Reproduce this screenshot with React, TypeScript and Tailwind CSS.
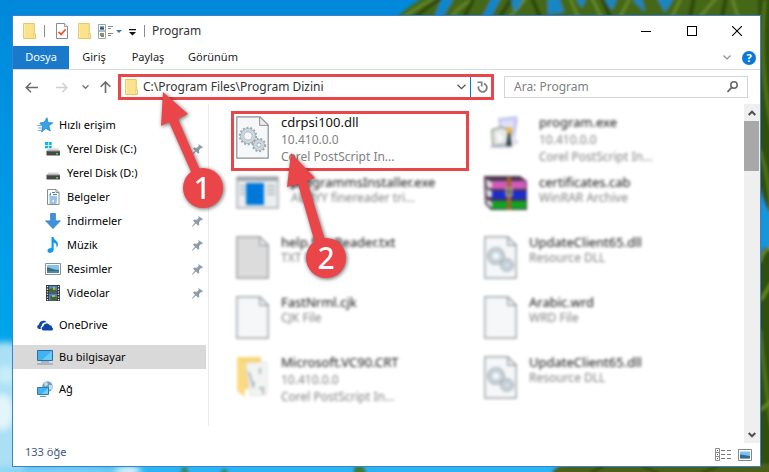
import type { ReactNode } from 'react';
import clsx from 'clsx';

type IconProps = { className?: string };

/* ---------- Desktop ---------- */

const Wallpaper = () => (
  <svg
    className="absolute inset-0 h-full w-full"
    viewBox="0 0 769 472"
    preserveAspectRatio="none"
    aria-hidden="true"
  >
    <defs>
      <linearGradient id="sky" x1="0" y1="0" x2="0" y2="1">
        <stop offset="0" stopColor="#0088da" />
        <stop offset="0.45" stopColor="#009be6" />
        <stop offset="0.7" stopColor="#00a4ea" />
        <stop offset="1" stopColor="#2cb5f5" />
      </linearGradient>
      <filter id="soft" x="-20%" y="-20%" width="140%" height="140%">
        <feGaussianBlur stdDeviation="3" />
      </filter>
      <filter id="leafSoft">
        <feGaussianBlur stdDeviation="1.4" />
      </filter>
    </defs>
    <rect width="769" height="472" fill="url(#sky)" />
    <g filter="url(#soft)">
      <path d="M-10 345 Q8 338 24 348 V480 H-10Z" fill="#a9e0f6" />
      <ellipse cx="2" cy="412" rx="12" ry="18" fill="#e2f5fb" />
      <ellipse cx="6" cy="375" rx="9" ry="9" fill="#c9edf9" />
      <ellipse cx="60" cy="471" rx="70" ry="5" fill="#7fd2f5" />
      <ellipse cx="128" cy="471" rx="13" ry="5" fill="#e6f6fb" />
    </g>
    <g filter="url(#leafSoft)">
      <path d="M397 17 Q420 -4 440 -8 H780 V18 H397Z" fill="#456812" />
      <path d="M404 17 Q424 2 438 -2 M452 17 Q458 6 476 -2 M526 -2 L510 17 M570 -2 L578 17 M592 -2 L601 17 M620 17 L630 -2 M681 -2 L672 17 M700 17 L716 -2 M738 17 L732 -2" stroke="#64862a" strokeWidth="3" fill="none" />
      <path d="M416 17 Q430 4 442 -2 M464 17 L474 -2 M500 17 L512 -2 M540 17 L532 -2 M690 17 L694 -2 M722 17 L726 -2 M610 17 L602 -2" stroke="#2c470a" strokeWidth="4" fill="none" />
      <path d="M442 -2 H454 L442 18 H434Z M492 -2 H501 L490 18 H482Z" fill="#0c87cf" />
      <path d="M548 -2 H559 L564 12 L548 14Z M511 -1 L523 -1 L518 9 L514 11Z M576 -1 h10 l-4 9z M604 -1 h13 l-5 11z M632 -1 l10 0 l3 13z M657 -2 h17 l-9 14z" fill="#1687c4" />
      <path d="M758 -5 H775 V480 H745 V464 H758Z" fill="#2f4f08" />
      <path d="M765 0 Q758 60 772 130 M760 150 Q770 180 771 215 M760 330 Q766 390 772 430" stroke="#55781a" strokeWidth="3" fill="none" />
      <path d="M760 188 Q765 208 772 216 V252 Q765 240 760 256Z" fill="#1597dc" />
      <path d="M760 262 Q765 245 772 250 M761 300 L772 282 M761 410 L772 400" stroke="#6c8c24" strokeWidth="3" fill="none" />
      <path d="M551 474 Q556 464 572 464 H775 V474Z" fill="#4b6014" />
      <path d="M590 474 l14 -9 M640 465 l20 9 M700 474 l20 -9" stroke="#2f4709" strokeWidth="3" />
      <path d="M353 474 l2 -8 h8 l4 8z" fill="#3c7a35" />
      <path d="M180 474 l2 -7 h5 l2 7z M220 474 l2 -5 h5 l1 5z" fill="#338a6a" />
    </g>
  </svg>
);

/* ---------- Icons ---------- */

const FolderIcon = ({ className }: IconProps) => (
  <svg className={clsx('h-4 w-[13px] shrink-0', className)} viewBox="0 0 13 16">
    <path d="M.5.5h10.8v10.4h1.2v4.6H.5z" fill="#fbe28c" stroke="#e7c767" />
    <path d="M10.5 11h2v4.5h-1.2z" fill="#fff3b8" stroke="#e3bd52" strokeWidth=".6" />
    <path d="M1.4 1.4v13.2" stroke="#fdf0bd" strokeWidth=".8" />
  </svg>
);

const CheckPageIcon = () => (
  <svg className="h-4 w-3" viewBox="0 0 12 16">
    <path d="M.5.5h8l3 3v12H.5z" fill="#fff" stroke="#8a8a8a" />
    <path d="M8.5.5v3h3" fill="#eee" stroke="#8a8a8a" strokeWidth=".8" />
    <path d="M2.5 8.800l2.600 2.600 4.600-5.200" fill="none" stroke="#f0512d" strokeWidth="1.700" />
  </svg>
);

const ViewIcon = () => (
  <svg className="h-[15px] w-4" viewBox="0 0 16 15">
    <path d="M.5.5h7v6.500h-7zM.5 7h7v7.500h-7z" fill="#fff" stroke="#a2a2a2" />
    <path d="M2 2h4v3.500H2z" fill="#69a9e0" />
    <path d="M2 4l2-1 2 1v1.500H2z" fill="#2a5674" />
    <path d="M2 9h2v3H2z" fill="#5a8fd8" />
    <path d="M4 9h2v2H4z" fill="#e07850" />
    <path d="M3 11h3v2H3z" fill="#55a645" />
    <path d="M10 2.500h5M10 4.500h3M10 9.500h5M10 11.500h3" stroke="#888" />
  </svg>
);

const StarIcon = () => (
  <svg className="h-4 w-4" viewBox="0 0 16 16">
    <path d="M10 .8l1 4.700 4.800.4-4 2.900 1.500 5.200-4.400-2.600-4.300 3.600 1-5.400L2.800 6l4.300-.7z" fill="#37a3e8" stroke="#1879bd" strokeWidth=".7" />
    <path d="M0 8.500h4M1 11h4M1 13.500h3.500" stroke="#58b5ee" strokeWidth=".9" />
  </svg>
);

const DiskIcon = ({ windows }: { windows?: boolean }) => (
  <svg className="h-4 w-4" viewBox="0 0 16 16">
    {windows && <path d="M0 1h3v3H0zM3.700 1h3v3h-3zM0 4.700h3v2.600H0zM3.700 4.700h3v2.600h-3z" fill="#12b5ea" />}
    <path d="M3.500 7.500h9.500l2 3H1.500z" fill="#d5d5d5" />
    <path d="M1.500 10h13.500v4.500H1.500z" fill="#474747" />
    <path d="M1.500 10h13.500" stroke="#8c8c8c" />
    <path d="M11 12h2v1.500h-2z" fill="#3be04c" />
  </svg>
);

const DocumentIcon = () => (
  <svg className="h-4 w-4" viewBox="0 0 16 16">
    <path d="M2.500.5h8.500l3 3v12H2.500z" fill="#fff" stroke="#8b8b8b" />
    <path d="M11 .5v3h3" fill="none" stroke="#8b8b8b" />
    <path d="M7 3.500h3M8 5.500h4M4.500 8h7.500M4.500 10h7.500M4.500 12h3M9 12h3M4.500 14h7" stroke="#3a86c8" />
    <path d="M4 6.500l2-3.500v3.500z" fill="#3a86c8" />
  </svg>
);

const DownloadIcon = () => (
  <svg className="h-4 w-4" viewBox="0 0 16 16">
    <path d="M5.500.3h5v7.500h5L8 15.700.5 7.800h5z" fill="#3f90de" stroke="#2c79c4" strokeWidth=".6" />
  </svg>
);

const MusicIcon = () => (
  <svg className="h-4 w-4" viewBox="0 0 16 16">
    <path d="M6.500 0h2c.3 3 4.800 4 4.500 7.500-.1 1.500-1 2.500-1.700 3 .8-2.500-.4-4.300-2.600-5v7.300c0 1.700-1.600 3.100-3.600 3.100-1.600 0-2.600-.9-2.600-2.200C2.500 12 4.200 10.900 6.500 11z" fill="#119bed" />
  </svg>
);

const PictureIcon = () => (
  <svg className="h-4 w-4" viewBox="0 0 16 16">
    <path d="M.5 2.500h15v11H.5z" fill="#fff" stroke="#8f8f8f" />
    <path d="M2 4h12v8H2z" fill="#86c2ee" />
    <path d="M2 6.500c3 0 5 2 12 2.500V12H2z" fill="#3b6e71" />
    <path d="M2 10h12v2H2z" fill="#4b86b4" />
  </svg>
);

const VideoIcon = () => (
  <svg className="h-4 w-4" viewBox="0 0 16 16">
    <path d="M1 0h14v16H1z" fill="#333" />
    <path d="M4 .7h8v7H4zM4 8.400h8v7H4z" fill="#4585d6" />
    <path d="M4 4l4-1 4 3v1.700H4zM5 12l3-2 4 3v2.400H6z" fill="#3f6832" />
    <path d="M8 2h2v3H8zM7 10h3v2H7z" fill="#e2a52b" />
    <path d="M2.500 1v15M13.500 1v15" stroke="#e6e6e6" strokeWidth="1.300" strokeDasharray="1.300 1.300" />
  </svg>
);

const CloudIcon = () => (
  <svg className="h-4 w-4" viewBox="0 0 16 16">
    <path d="M1.800 12C-.4 11-.2 8.300 2 7.700 2.300 4.200 7 2.200 9.600 5.300 6.500 5 4.700 6.800 4.600 9 3.500 9.500 3.300 11 4 12z" fill="#0d47a8" />
    <path d="M6.600 13.400c-2.600-.2-2.600-3.600-.2-3.800.2-3.200 4.700-4.400 6.300-1.400 2-.2 2.500 1.400 2.200 2.200 1.700.6 1.300 3-.4 3z" fill="#0d47a8" />
  </svg>
);

const ComputerIcon = () => (
  <svg className="h-4 w-4" viewBox="0 0 16 16">
    <path d="M.5 1.500h15v10H.5z" fill="#41b3f5" stroke="#2a6f9e" />
    <path d="M15 2v9H5z" fill="#6cc9fb" />
    <path d="M4 13h8M0 15h16" stroke="#7894a6" />
  </svg>
);

const NetworkIcon = () => (
  <svg className="h-4 w-4" viewBox="0 0 16 16">
    <circle cx="10.500" cy="5.500" r="5.200" fill="#6d9fb9" />
    <path d="M7 2l3-1.300 1 3-3 2zM12 4l3.500 0-.5 4-3 1z" fill="#c6dde6" />
    <path d="M.5 6.500h11v7H.5z" fill="#41b3f5" stroke="#2a7fb8" />
    <path d="M11 7v6H5z" fill="#74cdfb" />
    <path d="M3 15.500h6" stroke="#7894a6" />
  </svg>
);

const PinIcon = () => (
  <svg className="h-[11px] w-[11px]" viewBox="0 0 11 11" aria-hidden="true">
    <path d="M6.500 0L11 3.300 9.800 4.300 9 4 7 6.300l.3 2.400-1.100 1L4 7.600.6 10.800 0 10.300l3-3.500L1 4.600l1-1 2.500.3L6.700 2z" fill="#8f9ba7" />
  </svg>
);

/* ---------- File type icons ---------- */

const Gear = ({ cx, cy, r }: { cx: number; cy: number; r: number }) => (
  <g fill="none">
    <circle cx={cx} cy={cy} r={r} stroke="#9aa9b3" strokeWidth="2.400" strokeDasharray="1.900 1.700" />
    <circle cx={cx} cy={cy} r={r - 2.2} stroke="#9aa9b3" strokeWidth="4" />
    <circle cx={cx} cy={cy} r={r - 2.2} stroke="#ccd6dc" strokeWidth="2.800" />
  </g>
);

const PageIcon = ({ fill = '#f5f7f9', gears }: { fill?: string; gears?: boolean }) => (
  <svg className="h-[43px] w-[33px]" viewBox="0 0 33 43">
    <path d="M.8.8H24l8.200 8.200v33.200H.8z" fill={fill} stroke="#8d9195" strokeWidth="1.200" />
    <path d="M23.600.8V9.400h8.600z" fill="#e9ebed" stroke="#8d9195" />
    {gears && (
      <>
        <Gear cx={12} cy={20} r={8} />
        <Gear cx={23} cy={29} r={6} />
      </>
    )}
  </svg>
);

const AppIcon = () => (
  <svg className="h-[33px] w-[43px]" viewBox="0 0 43 33">
    <path d="M1 1h41v31H1z" fill="#eceeef" stroke="#a6abb0" strokeWidth="1.500" />
    <path d="M1 1h41v4H1z" fill="#9fa7ae" />
    <path d="M10 7h18v22H10z" fill="#0078d9" />
    <path d="M31 10h8M31 14h8M31 18h8M4 10h5M4 14h5M4 18h5" stroke="#b5babf" strokeWidth="2" />
  </svg>
);

const SetupIcon = () => (
  <svg className="h-9 w-[43px]" viewBox="0 0 43 36">
    <path d="M14 2l19-2 1 4-3 17-15-2z" fill="#c6c8ef" />
    <path d="M17 5l13-1-1 9-12 1z" fill="#e0e1f8" />
    <path d="M8 14l9-3 8 3v14l-16 2z" fill="#e5e8e5" stroke="#8b9a8c" strokeWidth="1.500" />
    <path d="M23 11l5 1v6l-5 1z" fill="#efb33b" />
    <path d="M24 17l2 0 2 13h-6z" fill="#35434c" />
    <path d="M13 17l6 4-4 6z" fill="#fff" />
    <path d="M6 31h22" stroke="#c5c8e0" strokeWidth="2" />
    <path d="M27 19l8 7-5 4z" fill="#dcdde6" />
  </svg>
);

const RarIcon = () => (
  <svg className="h-[35px] w-[43px]" viewBox="0 0 43 35">
    <path d="M0 0h36l7 5v29H7L1 28z" fill="#4b354b" />
    <path d="M2 3l6 3v6H3zM2 13l6 2v6H3zM2 23l6 3v6l-5-4z" fill="#dedbe2" />
    <path d="M8 5h34v8H8z" fill="#cf5abb" />
    <path d="M8 15h34v8H8z" fill="#1b2bd0" />
    <path d="M8 25h34v8H8z" fill="#13a324" />
    <path d="M23 1h4v33h-4z" fill="#a0632f" />
    <path d="M22 12h6v8h-6z" fill="#6b716d" stroke="#d7c08e" />
  </svg>
);

const OpenFolderIcon = () => (
  <svg className="h-[42px] w-[33px]" viewBox="0 0 33 42">
    <path d="M1 1h24v32H6L1 36z" fill="#f9d576" />
    <path d="M10 7l21-1v33l-17 1z" fill="#f3f4f2" stroke="#e0e2e0" />
    <path d="M13 16l4 14M24 12v6M18 26l-1 6M23 32h4v6" stroke="#a9b7c0" strokeWidth="2" fill="none" />
    <path d="M1 1l8 8v32l-8-6z" fill="#fadb84" />
  </svg>
);

/* ---------- Data ---------- */

type Place = { label: string; icon: ReactNode; level: 0 | 1; pinned?: boolean; spaced?: boolean; active?: boolean };

const places: Place[] = [
  { label: 'Hızlı erişim', icon: <StarIcon />, level: 0 },
  { label: 'Yerel Disk (C:)', icon: <DiskIcon windows />, level: 1, pinned: true },
  { label: 'Yerel Disk (D:)', icon: <DiskIcon />, level: 1, pinned: true },
  { label: 'Belgeler', icon: <DocumentIcon />, level: 1, pinned: true },
  { label: 'İndirmeler', icon: <DownloadIcon />, level: 1, pinned: true },
  { label: 'Müzik', icon: <MusicIcon />, level: 1, pinned: true },
  { label: 'Resimler', icon: <PictureIcon />, level: 1, pinned: true },
  { label: 'Videolar', icon: <VideoIcon />, level: 1, pinned: true },
  { label: 'OneDrive', icon: <CloudIcon />, level: 0, spaced: true },
  { label: 'Bu bilgisayar', icon: <ComputerIcon />, level: 0, spaced: true, active: true },
  { label: 'Ağ', icon: <NetworkIcon />, level: 0, spaced: true },
];

type FileEntry = { name: string; meta: string[]; icon: ReactNode; selected?: boolean };

const files: FileEntry[] = [
  { name: 'cdrpsi100.dll', meta: ['10.410.0.0', 'Corel PostScript In...'], icon: <PageIcon gears />, selected: true },
  { name: 'program.exe', meta: ['10.410.0.0', 'Corel PostScript In...'], icon: <SetupIcon /> },
  { name: 'programmsInstaller.exe', meta: ['ABBYY finereader tri...'], icon: <AppIcon /> },
  { name: 'certificates.cab', meta: ['WinRAR Archive'], icon: <RarIcon /> },
  { name: 'help.fineReader.txt', meta: ['TXT File'], icon: <PageIcon fill="#dcdcdc" /> },
  { name: 'UpdateClient65.dll', meta: ['Resource DLL'], icon: <PageIcon gears /> },
  { name: 'FastNrml.cjk', meta: ['CJK File'], icon: <PageIcon /> },
  { name: 'Arabic.wrd', meta: ['WRD File'], icon: <PageIcon /> },
  { name: 'Microsoft.VC90.CRT', meta: ['10.410.0.0', 'Corel PostScript In...'], icon: <OpenFolderIcon /> },
  { name: 'UpdateClient65.dll', meta: ['Resource DLL'], icon: <PageIcon gears /> },
];

/* ---------- Window parts ---------- */

const TitleBar = () => (
  <header className="flex h-[30px] items-center pl-[10px]">
    <FolderIcon />
    <span className="ml-2 h-3 w-px bg-[#8a8a8a]" />
    <div className="ml-[11px] flex items-center">
      <button type="button" aria-label="Özellikler">
        <CheckPageIcon />
      </button>
      <button type="button" aria-label="Yeni klasör" className="ml-[10px]">
        <FolderIcon />
      </button>
      <button type="button" aria-label="Görünüm seçenekleri" className="ml-[7px] flex items-center gap-[2px]">
        <ViewIcon />
        <svg className="h-[3px] w-[6px]" viewBox="0 0 6 3">
          <path d="M0 0h6L3 3z" fill="#3d76b0" />
        </svg>
      </button>
      <button type="button" aria-label="Araç çubuğunu özelleştir" className="ml-[7px]">
        <svg className="mt-[3px] h-[7px] w-[7px]" viewBox="0 0 7 7">
          <path d="M0 0h7v1.300H0zM0 3h7L3.500 6.500z" fill="#111" />
        </svg>
      </button>
    </div>
    <span className="ml-2 h-3 w-px bg-[#8a8a8a]" />
    <h1 className="ml-[7px] text-[12px] text-[#333]">Program</h1>
    <div className="ml-auto flex h-full">
      <button type="button" aria-label="Simge durumuna küçült" className="flex w-[46px] items-center justify-center">
        <span className="h-px w-[10px] bg-black" />
      </button>
      <button type="button" aria-label="Ekranı kapla" className="flex w-[45px] items-center justify-center">
        <span className="h-[10px] w-[10px] border border-black" />
      </button>
      <button type="button" aria-label="Kapat" className="flex w-[46px] items-center justify-center">
        <svg className="h-[10px] w-[10px]" viewBox="0 0 10 10">
          <path d="M0 0l10 10M10 0L0 10" stroke="#000" strokeWidth="1.100" />
        </svg>
      </button>
    </div>
  </header>
);

const Ribbon = () => (
  <div className="flex h-6 items-stretch border-b border-[#d9dadb] text-[11px] text-[#222]">
    <button type="button" className="w-14 bg-[#1979ca] text-white">
      Dosya
    </button>
    <button type="button" className="w-[50px]">
      Giriş
    </button>
    <button type="button" className="w-[58px]">
      Paylaş
    </button>
    <button type="button" className="w-[72px]">
      Görünüm
    </button>
    <div className="ml-auto flex items-center gap-[11px] pr-1">
      <button type="button" aria-label="Şeridi genişlet">
        <svg className="h-[5px] w-[8px]" viewBox="0 0 8 5">
          <path d="M.5.5L4 4 7.500.5" fill="none" stroke="#8d8d8d" strokeWidth="1.200" />
        </svg>
      </button>
      <button
        type="button"
        aria-label="Yardım"
        className="flex h-[14px] w-[14px] items-center justify-center rounded-full bg-[#0a78d4] text-[11px] leading-none font-bold text-white"
      >
        ?
      </button>
    </div>
  </div>
);

const NavBar = () => (
  <div className="flex h-[34px] items-center px-3">
    <button type="button" aria-label="Geri">
      <svg className="h-[11px] w-[13px]" viewBox="0 0 13 11">
        <path d="M13 5.500H1M6 .7L1.200 5.500 6 10.300" fill="none" stroke="#6b6b6b" strokeWidth="1.500" />
      </svg>
    </button>
    <button type="button" aria-label="İleri" className="ml-[18px]">
      <svg className="h-[11px] w-[12px]" viewBox="0 0 13 11">
        <path d="M0 5.500h12M7 .7l4.800 4.800L7 10.300" fill="none" stroke="#cfcfcf" strokeWidth="1.500" />
      </svg>
    </button>
    <button type="button" aria-label="Son konumlar" className="ml-[14px]">
      <svg className="h-[4px] w-[7px]" viewBox="0 0 7 4">
        <path d="M.5.3l3 3 3-3" fill="none" stroke="#777" strokeWidth="1.400" />
      </svg>
    </button>
    <button type="button" aria-label="Yukarı" className="ml-[11px]">
      <svg className="h-[12px] w-[11px]" viewBox="0 0 11 12">
        <path d="M5.500 12V1M.7 5.800L5.500 1l4.800 4.800" fill="none" stroke="#6b6b6b" strokeWidth="1.600" />
      </svg>
    </button>
    <div className="ml-[7px] flex h-[26px] min-w-0 flex-1 items-center border-3 border-[#ea4649] pl-1">
      <FolderIcon />
      <input
        aria-label="Adres"
        defaultValue="C:\Program Files\Program Dizini"
        className="ml-[5px] min-w-0 flex-1 bg-transparent text-[12px] text-[#333] outline-none"
      />
      <button type="button" aria-label="Önceki konumlar" className="mr-1">
        <svg className="h-[6px] w-[9px]" viewBox="0 0 9 6">
          <path d="M.5.7l4 4 4-4" fill="none" stroke="#555" strokeWidth="1.300" />
        </svg>
      </button>
      <span className="h-full w-px shrink-0 bg-[#0078d7]" />
      <button type="button" aria-label="Yenile" className="flex h-full w-5 items-center justify-center">
        <svg className="ml-[2px] h-[12px] w-[11px]" viewBox="0 0 11 12">
          <path d="M6.800 2.600A4.200 4.200 0 1 1 1.700 5.200" fill="none" stroke="#808080" strokeWidth="1.800" />
          <path d="M.5 1.300h4.200v4.200" fill="none" stroke="#808080" strokeWidth="1.600" />
        </svg>
      </button>
    </div>
    <div className="ml-[10px] flex h-[22px] w-[244px] items-center border border-[#d5d5d5] px-[9px]">
      <input
        type="search"
        aria-label="Ara: Program"
        placeholder="Ara: Program"
        className="min-w-0 flex-1 bg-transparent text-[12px] outline-none placeholder:text-[#808080]"
      />
      <svg className="h-[12px] w-[11px]" viewBox="0 0 11 12">
        <circle cx="7" cy="4" r="3.200" fill="none" stroke="#666" strokeWidth="1.500" />
        <path d="M4.700 6.400L.5 11" stroke="#666" strokeWidth="1.800" />
      </svg>
    </div>
  </div>
);

const Sidebar = () => (
  <nav className="mb-[17px] w-[196px] shrink-0 border-r border-[#ececec] pt-[9px] pr-[2px]">
    <ul>
      {places.map(({ label, icon, level, pinned, spaced, active }) => (
        <li key={label} className={clsx(spaced && 'mt-2')}>
          <a
            href="#"
            className={clsx(
              'flex h-6 items-center gap-[6px] pr-[3px] text-[11px] text-black',
              level === 0 ? 'pl-6' : 'pl-8',
              active && 'bg-[#d9d9d9]'
            )}
          >
            {icon}
            <span className="flex-1">{label}</span>
            {pinned && <PinIcon />}
          </a>
        </li>
      ))}
    </ul>
  </nav>
);

const FileItem = ({ name, meta, icon, selected }: FileEntry) => (
  <li
    className={clsx(
      'flex h-[60px] items-start gap-3 border-3 pl-[2px]',
      selected ? 'border-[#ea4649]' : 'border-transparent blur-[1.5px]',
      meta.length > 1 ? 'leading-[17px]' : 'leading-4'
    )}
  >
    <span className="mt-[2px] shrink-0">{icon}</span>
    <div className="min-w-0 whitespace-nowrap">
      <p className="text-[13px] text-[#111]">{name}</p>
      {meta.map((line) => (
        <p key={line} className="text-[12px] text-[#808080]">
          {line}
        </p>
      ))}
    </div>
  </li>
);

const ScrollBar = () => (
  <div className="flex w-4 shrink-0 flex-col bg-[#efefef]">
    <button type="button" aria-label="Yukarı kaydır" className="flex h-[17px] items-center justify-center">
      <svg className="h-[6px] w-[8px]" viewBox="0 0 8 6">
        <path d="M.7 5L4 1.700 7.300 5" fill="none" stroke="#505050" strokeWidth="2" />
      </svg>
    </button>
    <div className="mr-px h-[50px] bg-[#a8a8a8]" />
    <button type="button" aria-label="Aşağı kaydır" className="mt-auto flex h-[17px] items-center justify-center">
      <svg className="h-[6px] w-[8px]" viewBox="0 0 8 6">
        <path d="M.7 1L4 4.300 7.300 1" fill="none" stroke="#505050" strokeWidth="2" />
      </svg>
    </button>
  </div>
);

const StatusBar = () => (
  <footer className="flex h-[23px] items-center pr-2 pl-3 text-[11px] text-[#3f5878]">
    <span className="flex-1 pb-1">133 öğe</span>
    <button type="button" aria-label="Ayrıntılar">
      <svg className="h-[13px] w-4" viewBox="0 0 16 13">
        <path d="M.5.5h4v12h-4zM.5 4.500h4M.5 8.500h4" fill="#fff" stroke="#8b8b8b" />
        <path d="M2 2h1v1H2zM2 6h1v1H2zM2 10h1v1H2z" fill="#555" />
        <path d="M6 2.500h4M12 2.500h4M6 6.500h4M12 6.500h4M6 10.500h4M12 10.500h4" stroke="#777" />
      </svg>
    </button>
    <button type="button" aria-label="Büyük simgeler" className="ml-[7px]">
      <svg className="h-[12px] w-[14px]" viewBox="0 0 14 12">
        <path d="M.5.5h13v11H.5z" fill="#fff" stroke="#858585" />
        <path d="M2 2.500h10v7H2z" fill="#7fc0f3" />
        <path d="M2 5.500l4 .5 6 1v2.500H2z" fill="#356a8b" />
      </svg>
    </button>
  </footer>
);

/* Numbered arrows drawn over the window */
const Callouts = () => (
  <svg
    className="pointer-events-none absolute top-0 left-0 h-[472px] w-[769px] drop-shadow-[1px_1px_2px_rgba(0,0,0,0.6)]"
    viewBox="0 0 769 472"
  >
    <g fill="#ea4649">
      <path d="M163 92L188 114 178 119 200 170 192 174 169 122 161 126z" />
      <circle cx="203" cy="188" r="20" />
      <path d="M291 153L315 178 307 181 325 240 315 243 298 184 287 187z" />
      <circle cx="326" cy="258" r="20" />
    </g>
    <g fill="#fff" fontSize="30" fontWeight="500" textAnchor="middle" className="font-['Noto_Sans','Open_Sans',sans-serif]">
      <text x="202" y="199">1</text>
      <text x="326" y="269">2</text>
    </g>
  </svg>
);

export default function App() {
  return (
    <div className="relative flex min-h-screen flex-col overflow-hidden bg-[#0088da] pt-[15px] pr-2 pb-[5px] pl-3 font-['Noto_Sans','Open_Sans',sans-serif]">
      <Wallpaper />
      <main className="relative flex flex-1 flex-col border border-[#3f7fcb] bg-white">
        <TitleBar />
        <Ribbon />
        <NavBar />
        <div className="flex flex-1">
          <Sidebar />
          <ul className="grid flex-1 grid-cols-2 content-start gap-x-[10px] pt-[7px] pr-[27px] pl-[22px]">
            {files.map((file, i) => (
              <FileItem key={i} {...file} />
            ))}
          </ul>
          <ScrollBar />
        </div>
        <StatusBar />
      </main>
      <Callouts />
    </div>
  );
}
